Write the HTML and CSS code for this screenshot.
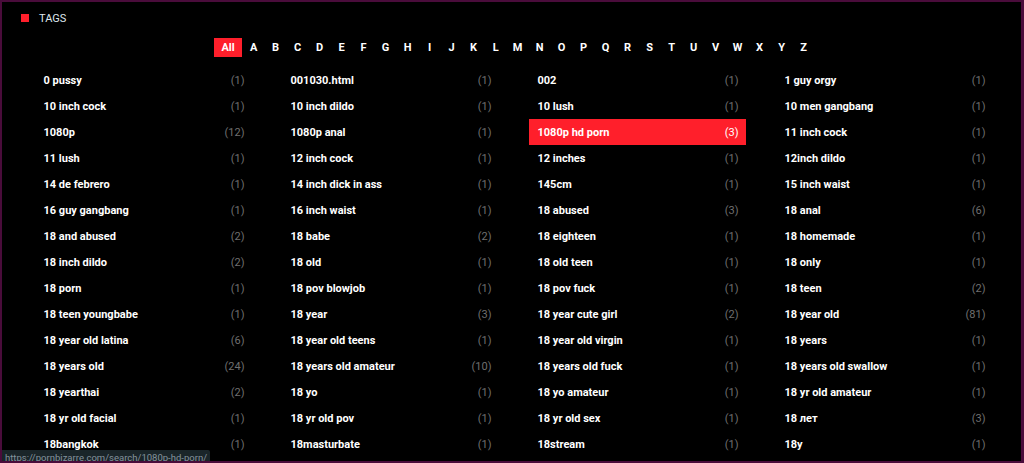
FILE: index.html
```html
<!DOCTYPE html>
<html lang="en">
<head>
    <meta charset="UTF-8">
    <title>Tags</title>
    <link rel="stylesheet" href="styles.css">
</head>
<body>
    <div class="frame">
        <div class="block-title">
            <span class="marker"></span>
            <span>TAGS</span>
        </div>

        <div class="letters">
            <a class="letter active" href="#">All</a>
            <a class="letter" href="#">A</a>
            <a class="letter" href="#">B</a>
            <a class="letter" href="#">C</a>
            <a class="letter" href="#">D</a>
            <a class="letter" href="#">E</a>
            <a class="letter" href="#">F</a>
            <a class="letter" href="#">G</a>
            <a class="letter" href="#">H</a>
            <a class="letter" href="#">I</a>
            <a class="letter" href="#">J</a>
            <a class="letter" href="#">K</a>
            <a class="letter" href="#">L</a>
            <a class="letter" href="#">M</a>
            <a class="letter" href="#">N</a>
            <a class="letter" href="#">O</a>
            <a class="letter" href="#">P</a>
            <a class="letter" href="#">Q</a>
            <a class="letter" href="#">R</a>
            <a class="letter" href="#">S</a>
            <a class="letter" href="#">T</a>
            <a class="letter" href="#">U</a>
            <a class="letter" href="#">V</a>
            <a class="letter" href="#">W</a>
            <a class="letter" href="#">X</a>
            <a class="letter" href="#">Y</a>
            <a class="letter" href="#">Z</a>
        </div>

        <div class="tags">
            <a class="tag" href="#"><span>0 pussy</span><span class="count">(1)</span></a>
            <a class="tag" href="#"><span>001030.html</span><span class="count">(1)</span></a>
            <a class="tag" href="#"><span>002</span><span class="count">(1)</span></a>
            <a class="tag" href="#"><span>1 guy orgy</span><span class="count">(1)</span></a>

            <a class="tag" href="#"><span>10 inch cock</span><span class="count">(1)</span></a>
            <a class="tag" href="#"><span>10 inch dildo</span><span class="count">(1)</span></a>
            <a class="tag" href="#"><span>10 lush</span><span class="count">(1)</span></a>
            <a class="tag" href="#"><span>10 men gangbang</span><span class="count">(1)</span></a>

            <a class="tag" href="#"><span>1080p</span><span class="count">(12)</span></a>
            <a class="tag" href="#"><span>1080p anal</span><span class="count">(1)</span></a>
            <a class="tag active" href="#"><span>1080p hd porn</span><span class="count">(3)</span></a>
            <a class="tag" href="#"><span>11 inch cock</span><span class="count">(1)</span></a>

            <a class="tag" href="#"><span>11 lush</span><span class="count">(1)</span></a>
            <a class="tag" href="#"><span>12 inch cock</span><span class="count">(1)</span></a>
            <a class="tag" href="#"><span>12 inches</span><span class="count">(1)</span></a>
            <a class="tag" href="#"><span>12inch dildo</span><span class="count">(1)</span></a>

            <a class="tag" href="#"><span>14 de febrero</span><span class="count">(1)</span></a>
            <a class="tag" href="#"><span>14 inch dick in ass</span><span class="count">(1)</span></a>
            <a class="tag" href="#"><span>145cm</span><span class="count">(1)</span></a>
            <a class="tag" href="#"><span>15 inch waist</span><span class="count">(1)</span></a>

            <a class="tag" href="#"><span>16 guy gangbang</span><span class="count">(1)</span></a>
            <a class="tag" href="#"><span>16 inch waist</span><span class="count">(1)</span></a>
            <a class="tag" href="#"><span>18 abused</span><span class="count">(3)</span></a>
            <a class="tag" href="#"><span>18 anal</span><span class="count">(6)</span></a>

            <a class="tag" href="#"><span>18 and abused</span><span class="count">(2)</span></a>
            <a class="tag" href="#"><span>18 babe</span><span class="count">(2)</span></a>
            <a class="tag" href="#"><span>18 eighteen</span><span class="count">(1)</span></a>
            <a class="tag" href="#"><span>18 homemade</span><span class="count">(1)</span></a>

            <a class="tag" href="#"><span>18 inch dildo</span><span class="count">(2)</span></a>
            <a class="tag" href="#"><span>18 old</span><span class="count">(1)</span></a>
            <a class="tag" href="#"><span>18 old teen</span><span class="count">(1)</span></a>
            <a class="tag" href="#"><span>18 only</span><span class="count">(1)</span></a>

            <a class="tag" href="#"><span>18 porn</span><span class="count">(1)</span></a>
            <a class="tag" href="#"><span>18 pov blowjob</span><span class="count">(1)</span></a>
            <a class="tag" href="#"><span>18 pov fuck</span><span class="count">(1)</span></a>
            <a class="tag" href="#"><span>18 teen</span><span class="count">(2)</span></a>

            <a class="tag" href="#"><span>18 teen youngbabe</span><span class="count">(1)</span></a>
            <a class="tag" href="#"><span>18 year</span><span class="count">(3)</span></a>
            <a class="tag" href="#"><span>18 year cute girl</span><span class="count">(2)</span></a>
            <a class="tag" href="#"><span>18 year old</span><span class="count">(81)</span></a>

            <a class="tag" href="#"><span>18 year old latina</span><span class="count">(6)</span></a>
            <a class="tag" href="#"><span>18 year old teens</span><span class="count">(1)</span></a>
            <a class="tag" href="#"><span>18 year old virgin</span><span class="count">(1)</span></a>
            <a class="tag" href="#"><span>18 years</span><span class="count">(1)</span></a>

            <a class="tag" href="#"><span>18 years old</span><span class="count">(24)</span></a>
            <a class="tag" href="#"><span>18 years old amateur</span><span class="count">(10)</span></a>
            <a class="tag" href="#"><span>18 years old fuck</span><span class="count">(1)</span></a>
            <a class="tag" href="#"><span>18 years old swallow</span><span class="count">(1)</span></a>

            <a class="tag" href="#"><span>18 yearthai</span><span class="count">(2)</span></a>
            <a class="tag" href="#"><span>18 yo</span><span class="count">(1)</span></a>
            <a class="tag" href="#"><span>18 yo amateur</span><span class="count">(1)</span></a>
            <a class="tag" href="#"><span>18 yr old amateur</span><span class="count">(1)</span></a>

            <a class="tag" href="#"><span>18 yr old facial</span><span class="count">(1)</span></a>
            <a class="tag" href="#"><span>18 yr old pov</span><span class="count">(1)</span></a>
            <a class="tag" href="#"><span>18 yr old sex</span><span class="count">(1)</span></a>
            <a class="tag" href="#"><span>18 лет</span><span class="count">(3)</span></a>

            <a class="tag" href="#"><span>18bangkok</span><span class="count">(1)</span></a>
            <a class="tag" href="#"><span>18masturbate</span><span class="count">(1)</span></a>
            <a class="tag" href="#"><span>18stream</span><span class="count">(1)</span></a>
            <a class="tag" href="#"><span>18y</span><span class="count">(1)</span></a>
        </div>

        <div class="status-url">https://pornbizarre.com/search/1080p-hd-porn/</div>
    </div>
</body>
</html>
```

FILE: styles.css
```css
html, body {
    margin: 0;
    height: 100%;
    background: #000;
}

body {
    font-family: Roboto, 'Liberation Sans', Arial, sans-serif;
    overflow: hidden;
}

.frame {
    position: relative;
    box-sizing: border-box;
    height: 463px;
    border: 2px solid #4a0c3b;
    border-right-width: 3px;
    overflow: hidden;
}

.block-title {
    display: flex;
    align-items: center;
    gap: 10px;
    padding: 9px 0 0 19px;
    height: 14px;
    font-size: 11px;
    color: #dfe6ee;
}

.marker {
    width: 8px;
    height: 8px;
    background: #ff1f2b;
}

.letters {
    display: flex;
    justify-content: center;
    margin-top: 13px;
    padding-left: 6px;
}

.letter {
    display: block;
    padding: 0 6px;
    min-width: 10px;
    height: 19px;
    line-height: 19px;
    text-align: center;
    font-size: 11px;
    font-weight: 700;
    color: #fff;
    text-decoration: none;
}

.letter.active {
    background: #ff1f2b;
    padding: 0 7px;
    margin-right: 1px;
}

.tags {
    display: grid;
    grid-template-columns: repeat(4, 217px);
    column-gap: 30px;
    justify-content: center;
    margin-top: 10px;
    padding-left: 4px;
}

.tag {
    display: flex;
    justify-content: space-between;
    align-items: center;
    height: 26px;
    padding: 0 7px 0 9px;
    font-size: 11px;
    font-weight: 700;
    color: #fff;
    text-decoration: none;
}

.tag .count {
    font-weight: 400;
    color: #6f6f6f;
}

.tag.active {
    background: #ff1f2b;
}

.tag.active .count {
    color: #fff;
}

.status-url {
    position: absolute;
    left: 0;
    bottom: 0;
    padding: 0 3px;
    height: 11px;
    line-height: 15px;
    font-size: 9.5px;
    background: #1a2529;
    color: #85939d;
    border-top-right-radius: 2px;
}
```
